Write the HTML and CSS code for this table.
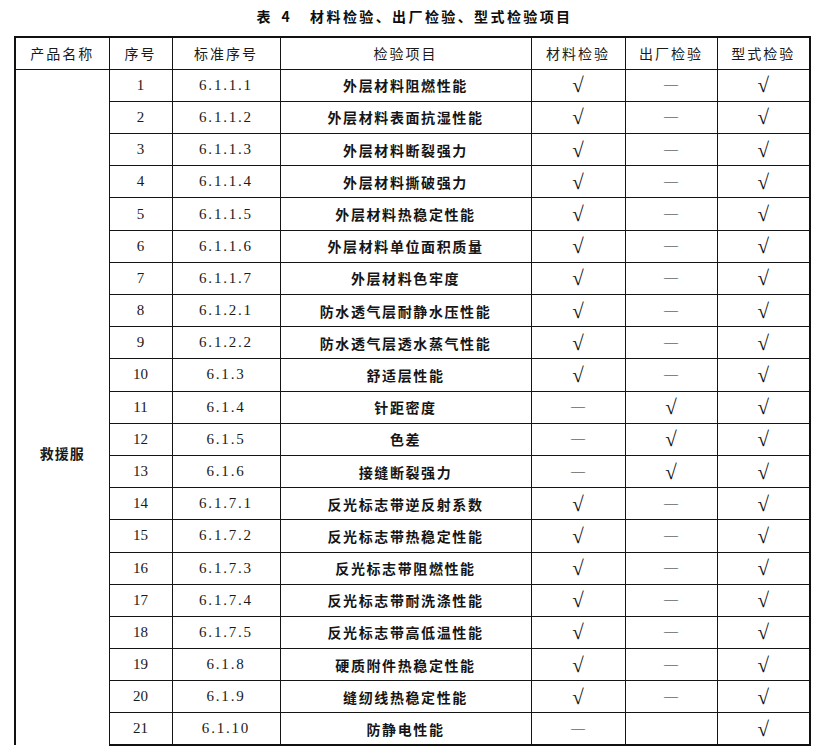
FILE: index.html
```html
<!DOCTYPE html>
<html lang="zh-CN">
<head>
<meta charset="utf-8">
<title>表4 材料检验、出厂检验、型式检验项目</title>
<link rel="stylesheet" href="styles.css">
</head>
<body>
<div class="page">
  <h1 class="caption"><span class="cap-no">表 4</span><span class="cap-text">材料检验、出厂检验、型式检验项目</span></h1>
  <table class="grid">
    <colgroup>
      <col class="c1"><col class="c2"><col class="c3"><col class="c4"><col class="c5"><col class="c6"><col class="c7">
    </colgroup>
    <thead>
      <tr>
        <th>产品名称</th><th>序号</th><th>标准序号</th><th>检验项目</th><th>材料检验</th><th>出厂检验</th><th>型式检验</th>
      </tr>
    </thead>
    <tbody>
      <tr><td class="prod" rowspan="21"><span>救援服</span></td><td class="num">1</td><td class="std">6.1.1.1</td><td class="item">外层材料阻燃性能</td><td class="ck">√</td><td class="ds">—</td><td class="ck">√</td></tr>
      <tr><td class="num">2</td><td class="std">6.1.1.2</td><td class="item">外层材料表面抗湿性能</td><td class="ck">√</td><td class="ds">—</td><td class="ck">√</td></tr>
      <tr><td class="num">3</td><td class="std">6.1.1.3</td><td class="item">外层材料断裂强力</td><td class="ck">√</td><td class="ds">—</td><td class="ck">√</td></tr>
      <tr><td class="num">4</td><td class="std">6.1.1.4</td><td class="item">外层材料撕破强力</td><td class="ck">√</td><td class="ds">—</td><td class="ck">√</td></tr>
      <tr><td class="num">5</td><td class="std">6.1.1.5</td><td class="item">外层材料热稳定性能</td><td class="ck">√</td><td class="ds">—</td><td class="ck">√</td></tr>
      <tr><td class="num">6</td><td class="std">6.1.1.6</td><td class="item">外层材料单位面积质量</td><td class="ck">√</td><td class="ds">—</td><td class="ck">√</td></tr>
      <tr><td class="num">7</td><td class="std">6.1.1.7</td><td class="item">外层材料色牢度</td><td class="ck">√</td><td class="ds">—</td><td class="ck">√</td></tr>
      <tr><td class="num">8</td><td class="std">6.1.2.1</td><td class="item">防水透气层耐静水压性能</td><td class="ck">√</td><td class="ds">—</td><td class="ck">√</td></tr>
      <tr><td class="num">9</td><td class="std">6.1.2.2</td><td class="item">防水透气层透水蒸气性能</td><td class="ck">√</td><td class="ds">—</td><td class="ck">√</td></tr>
      <tr><td class="num">10</td><td class="std">6.1.3</td><td class="item">舒适层性能</td><td class="ck">√</td><td class="ds">—</td><td class="ck">√</td></tr>
      <tr><td class="num">11</td><td class="std">6.1.4</td><td class="item">针距密度</td><td class="ds">—</td><td class="ck">√</td><td class="ck">√</td></tr>
      <tr><td class="num">12</td><td class="std">6.1.5</td><td class="item">色差</td><td class="ds">—</td><td class="ck">√</td><td class="ck">√</td></tr>
      <tr><td class="num">13</td><td class="std">6.1.6</td><td class="item">接缝断裂强力</td><td class="ds">—</td><td class="ck">√</td><td class="ck">√</td></tr>
      <tr><td class="num">14</td><td class="std">6.1.7.1</td><td class="item">反光标志带逆反射系数</td><td class="ck">√</td><td class="ds">—</td><td class="ck">√</td></tr>
      <tr><td class="num">15</td><td class="std">6.1.7.2</td><td class="item">反光标志带热稳定性能</td><td class="ck">√</td><td class="ds">—</td><td class="ck">√</td></tr>
      <tr><td class="num">16</td><td class="std">6.1.7.3</td><td class="item">反光标志带阻燃性能</td><td class="ck">√</td><td class="ds">—</td><td class="ck">√</td></tr>
      <tr><td class="num">17</td><td class="std">6.1.7.4</td><td class="item">反光标志带耐洗涤性能</td><td class="ck">√</td><td class="ds">—</td><td class="ck">√</td></tr>
      <tr><td class="num">18</td><td class="std">6.1.7.5</td><td class="item">反光标志带高低温性能</td><td class="ck">√</td><td class="ds">—</td><td class="ck">√</td></tr>
      <tr><td class="num">19</td><td class="std">6.1.8</td><td class="item">硬质附件热稳定性能</td><td class="ck">√</td><td class="ds">—</td><td class="ck">√</td></tr>
      <tr><td class="num">20</td><td class="std">6.1.9</td><td class="item">缝纫线热稳定性能</td><td class="ck">√</td><td class="ds">—</td><td class="ck">√</td></tr>
      <tr><td class="num">21</td><td class="std">6.1.10</td><td class="item">防静电性能</td><td class="ds">—</td><td class="ds blank"></td><td class="ck">√</td></tr>
    </tbody>
  </table>
</div>
</body>
</html>
```

FILE: styles.css
```css
html, body {
  margin: 0;
  padding: 0;
  background: #ffffff;
}

body {
  width: 826px;
  height: 746px;
  overflow: hidden;
  color: #111111;
  font-family: "Noto Sans CJK SC", "Liberation Sans", sans-serif;
}

.page {
  padding: 8px 0 0 14px;
}

.caption {
  margin: 0 0 11px 0;
  width: 795px;
  display: flex;
  justify-content: center;
  gap: 18px;
  font-size: 14px;
  line-height: 17px;
  font-weight: 700;
  letter-spacing: 2.4px;
  color: #0d0d0d;
  padding-left: 6px;
  box-sizing: border-box;
}

.cap-no {
  word-spacing: 3px;
}

.grid {
  width: 795px;
  border-collapse: collapse;
  table-layout: fixed;
  border: 2px solid #111111;
  border-bottom: none;
}

.c1 { width: 94px; }
.c2 { width: 63px; }
.c3 { width: 108px; }
.c4 { width: 251px; }
.c5 { width: 94px; }
.c6 { width: 92px; }
.c7 { width: 93px; }

.grid tr {
  height: 32.2px;
}

.grid th,
.grid td {
  border: 1px solid #151515;
  padding: 0;
  text-align: center;
  vertical-align: middle;
}

.grid th {
  font-size: 14px;
  font-weight: 400;
  letter-spacing: 2px;
  color: #1a1a1a;
}

.grid tbody tr:last-child td {
  border-bottom: 2px solid #111111;
}

.grid td.prod {
  vertical-align: top;
  padding-top: 373px;
  border-bottom: none;
  font-size: 14px;
  font-weight: 700;
  letter-spacing: 1px;
  line-height: 20px;
  color: #1a1a1a;
}

.num {
  font-family: "Liberation Serif", serif;
  font-size: 15px;
  color: #1a1a1a;
}

.std {
  font-family: "Liberation Serif", serif;
  font-size: 15px;
  letter-spacing: 1.8px;
  color: #1a1a1a;
}

.item {
  font-size: 14px;
  font-weight: 600;
  letter-spacing: 1.6px;
  color: #151515;
}

.ck {
  font-family: "Liberation Serif", serif;
  font-size: 21px;
  line-height: 22px;
  color: #111111;
}

.ds {
  font-family: "Liberation Serif", serif;
  font-size: 14px;
  color: #222222;
}
```
